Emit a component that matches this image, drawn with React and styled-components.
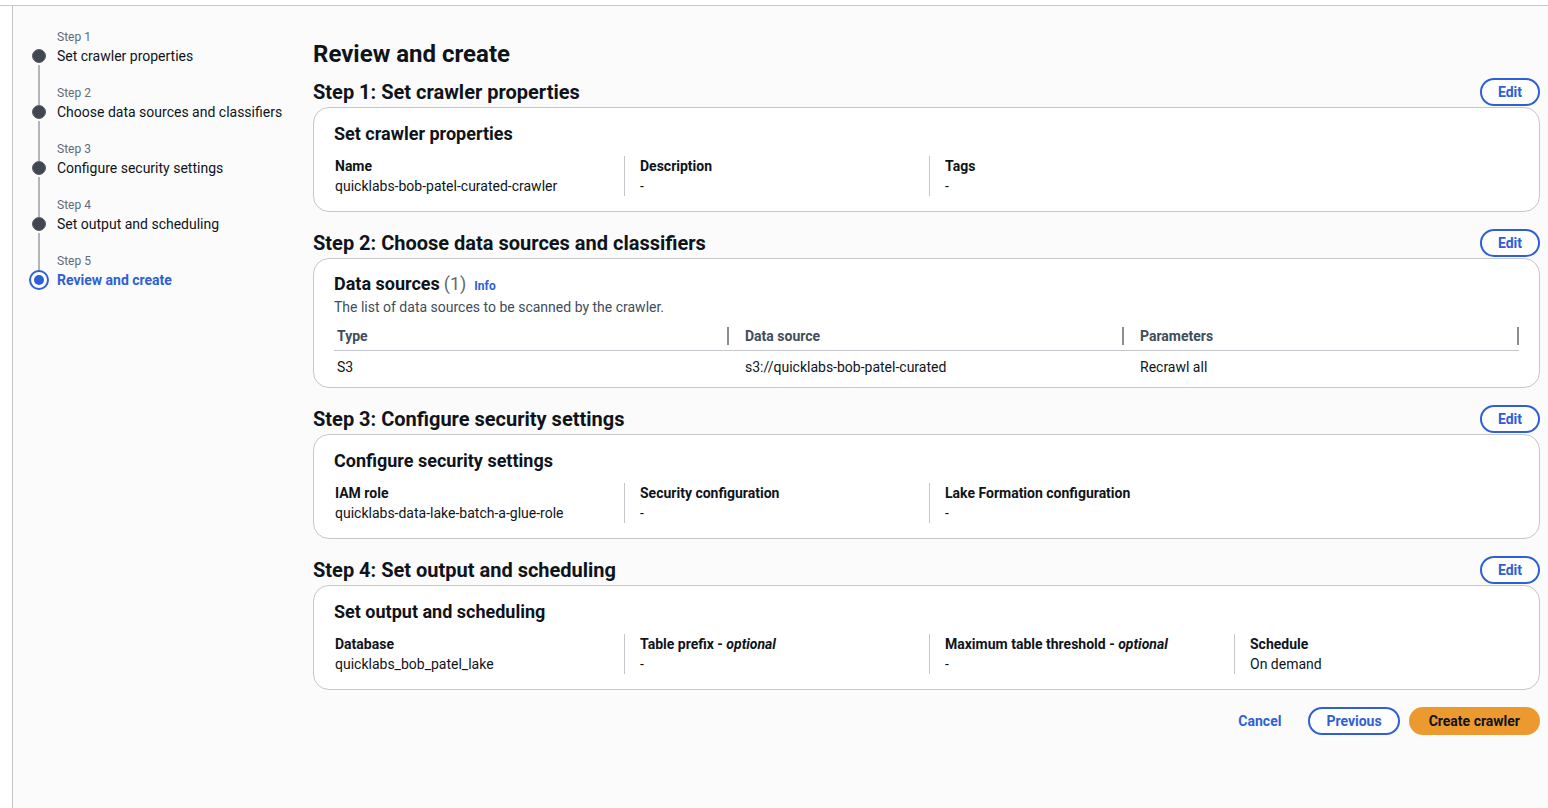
import styled, { createGlobalStyle } from "styled-components";

const GlobalStyle = createGlobalStyle`
  html, body {
    margin: 0;
    padding: 0;
    background: #ffffff;
    font-family: Roboto, "Liberation Sans", Arial, sans-serif;
    color: #0f141a;
    -webkit-font-smoothing: antialiased;
  }
`;

const BLUE = "#2e5fd8";
const BORDER = "#c6c6cd";

const Shell = styled.div`
  margin-top: 5px;
  border-top: 1px solid ${BORDER};
  padding-left: 12px;
  min-height: 802px;
  display: flex;
`;

const Frame = styled.div`
  flex: 1;
  min-width: 0;
  display: flex;
  border-left: 1px solid ${BORDER};
  background: #fbfbfb;
  min-height: 802px;
`;

const Nav = styled.ol`
  list-style: none;
  margin: 0;
  padding: 22px 0 0 19px;
  width: 281px;
  flex: 0 0 auto;
  box-sizing: border-box;
`;

const NavItem = styled.li`
  display: grid;
  grid-template-columns: 14px 1fr;
  grid-template-rows: 18px 20px;
  column-gap: 11px;
  margin-bottom: 18px;
`;

const StepLabel = styled.span`
  grid-column: 2;
  grid-row: 1;
  align-self: start;
  margin-top: 1px;
  font-size: 12px;
  line-height: 16px;
  color: #5f6b7a;
`;

const StepTitle = styled.span`
  grid-column: 2;
  grid-row: 2;
  font-size: 14px;
  line-height: 20px;
  white-space: nowrap;
  color: ${(p) => (p.$active ? BLUE : "#0f141a")};
  font-weight: ${(p) => (p.$active ? 700 : 400)};
`;

const Dot = styled.span`
  grid-column: 1;
  grid-row: 2;
  align-self: center;
  justify-self: center;
  position: relative;
  box-sizing: border-box;
  border-radius: 50%;
  width: ${(p) => (p.$active ? "20px" : "14px")};
  height: ${(p) => (p.$active ? "20px" : "14px")};
  background: ${(p) => (p.$active ? "#fff" : "#424650")};
  border: ${(p) => (p.$active ? `2px solid ${BLUE}` : "1px solid #5a5f6a")};
  display: flex;
  align-items: center;
  justify-content: center;

  &::before {
    content: "";
    display: ${(p) => (p.$active ? "block" : "none")};
    width: 10px;
    height: 10px;
    border-radius: 50%;
    background: ${BLUE};
  }

  &::after {
    content: "";
    display: ${(p) => (p.$last ? "none" : "block")};
    position: absolute;
    left: 5px;
    top: 15px;
    width: 2px;
    height: 40px;
    background: #b4b4bb;
  }
`;

const Main = styled.main`
  flex: 1;
  min-width: 0;
  padding: 33px 8px 20px 19px;
  display: flex;
  flex-direction: column;
`;

const PageTitle = styled.h1`
  margin: 0 0 9px;
  font-size: 24px;
  line-height: 30px;
  font-weight: 700;
`;

const Section = styled.section`
  margin-bottom: 17px;
`;

const SectionHeader = styled.div`
  display: flex;
  align-items: center;
  justify-content: space-between;
  height: 28px;
  margin-bottom: 1px;
`;

const SectionTitle = styled.h2`
  margin: 0;
  font-size: 20px;
  line-height: 24px;
  font-weight: 700;
`;

const PillButton = styled.button`
  font-family: inherit;
  font-size: 14px;
  font-weight: 700;
  line-height: 20px;
  border-radius: 20px;
  padding: ${(p) => (p.$primary ? "2px 18px" : "2px 16px")};
  cursor: pointer;
  border: 2px solid ${(p) => (p.$primary ? "#ec9a30" : BLUE)};
  background: ${(p) => (p.$primary ? "#ec9a30" : "#fff")};
  color: ${(p) => (p.$primary ? "#0f141a" : BLUE)};
`;

const LinkButton = styled.button`
  font-family: inherit;
  font-size: 14px;
  font-weight: 700;
  line-height: 20px;
  padding: 3px 16px;
  margin-right: 2px;
  border: none;
  background: transparent;
  color: ${BLUE};
  cursor: pointer;
`;

const Card = styled.div`
  min-width: 0;
  overflow: hidden;
  border: 1px solid ${BORDER};
  border-radius: 16px;
  background: #fff;
  padding: ${(p) => (p.$table ? "14px 20px 4px" : "15px 20px 15px")};
`;

const CardTitle = styled.h3`
  margin: 0;
  font-size: 18px;
  line-height: 22px;
  font-weight: 700;
  display: flex;
  align-items: baseline;
  gap: 8px;
`;

const Count = styled.span`
  font-weight: 400;
  color: #656871;
  margin-left: -4px;
`;

const InfoLink = styled.a`
  font-size: 12px;
  font-weight: 700;
  color: ${BLUE};
  text-decoration: none;
`;

const CardDesc = styled.p`
  margin: 0 0 4px;
  font-size: 14px;
  line-height: 20px;
  color: #414d5c;
`;

const Columns = styled.div`
  display: grid;
  grid-template-columns: repeat(4, 305px);
  margin: 11px 0 0 -15px;
`;

const Column = styled.div`
  padding-left: 15px;
  border-left: 1px solid ${(p) => (p.$first ? "transparent" : BORDER)};
  font-size: 14px;
  line-height: 20px;
`;

const Key = styled.div`
  font-weight: 700;

  em {
    font-style: italic;
  }
`;

const Value = styled.div`
  color: #0f141a;
`;

const Table = styled.table`
  width: 100%;
  border-collapse: collapse;
  table-layout: fixed;
  font-size: 14px;
  line-height: 20px;
`;

const Th = styled.th`
  position: relative;
  text-align: left;
  font-weight: 700;
  color: #414d5c;
  height: 29px;
  padding: 0 0 0 ${(p) => (p.$first ? "3px" : "16px")};
  border-bottom: 1px solid ${BORDER};

  &::after {
    content: "";
    position: absolute;
    right: 0;
    top: 6px;
    width: 2px;
    height: 18px;
    background: #8c8c94;
  }
`;

const Td = styled.td`
  height: 32px;
  padding: 0 0 0 ${(p) => (p.$first ? "3px" : "16px")};
`;

const Actions = styled.div`
  display: flex;
  justify-content: flex-end;
  align-items: center;
  gap: 9px;
`;

const steps = [
  "Set crawler properties",
  "Choose data sources and classifiers",
  "Configure security settings",
  "Set output and scheduling",
  "Review and create",
];

const KeyValues = ({ items }) => (
  <Columns>
    {items.map(([k, v], i) => (
      <Column key={i} $first={i === 0}>
        <Key>{k}</Key>
        <Value>{v}</Value>
      </Column>
    ))}
  </Columns>
);

const optional = (label) => (
  <>
    {label} - <em>optional</em>
  </>
);

function App() {
  return (
    <>
      <GlobalStyle />
      <Shell>
        <Frame>
          <Nav>
            {steps.map((s, i) => {
              const active = i === steps.length - 1;
              return (
                <NavItem key={s}>
                  <StepLabel>Step {i + 1}</StepLabel>
                  <Dot $active={active} $last={active} />
                  <StepTitle $active={active}>{s}</StepTitle>
                </NavItem>
              );
            })}
          </Nav>

          <Main>
            <PageTitle>Review and create</PageTitle>

            <Section>
              <SectionHeader>
                <SectionTitle>Step 1: Set crawler properties</SectionTitle>
                <PillButton>Edit</PillButton>
              </SectionHeader>
              <Card>
                <CardTitle>Set crawler properties</CardTitle>
                <KeyValues
                  items={[
                    ["Name", "quicklabs-bob-patel-curated-crawler"],
                    ["Description", "-"],
                    ["Tags", "-"],
                  ]}
                />
              </Card>
            </Section>

            <Section>
              <SectionHeader>
                <SectionTitle>Step 2: Choose data sources and classifiers</SectionTitle>
                <PillButton>Edit</PillButton>
              </SectionHeader>
              <Card $table>
                <CardTitle>
                  Data sources <Count>(1)</Count>
                  <InfoLink href="#">Info</InfoLink>
                </CardTitle>
                <CardDesc>The list of data sources to be scanned by the crawler.</CardDesc>
                <Table>
                  <thead>
                    <tr>
                      <Th $first>Type</Th>
                      <Th>Data source</Th>
                      <Th>Parameters</Th>
                    </tr>
                  </thead>
                  <tbody>
                    <tr>
                      <Td $first>S3</Td>
                      <Td>s3://quicklabs-bob-patel-curated</Td>
                      <Td>Recrawl all</Td>
                    </tr>
                  </tbody>
                </Table>
              </Card>
            </Section>

            <Section>
              <SectionHeader>
                <SectionTitle>Step 3: Configure security settings</SectionTitle>
                <PillButton>Edit</PillButton>
              </SectionHeader>
              <Card>
                <CardTitle>Configure security settings</CardTitle>
                <KeyValues
                  items={[
                    ["IAM role", "quicklabs-data-lake-batch-a-glue-role"],
                    ["Security configuration", "-"],
                    ["Lake Formation configuration", "-"],
                  ]}
                />
              </Card>
            </Section>

            <Section>
              <SectionHeader>
                <SectionTitle>Step 4: Set output and scheduling</SectionTitle>
                <PillButton>Edit</PillButton>
              </SectionHeader>
              <Card>
                <CardTitle>Set output and scheduling</CardTitle>
                <KeyValues
                  items={[
                    ["Database", "quicklabs_bob_patel_lake"],
                    [optional("Table prefix"), "-"],
                    [optional("Maximum table threshold"), "-"],
                    ["Schedule", "On demand"],
                  ]}
                />
              </Card>
            </Section>

            <Actions>
              <LinkButton>Cancel</LinkButton>
              <PillButton>Previous</PillButton>
              <PillButton $primary>Create crawler</PillButton>
            </Actions>
          </Main>
        </Frame>
      </Shell>
    </>
  );
}

export default App;
